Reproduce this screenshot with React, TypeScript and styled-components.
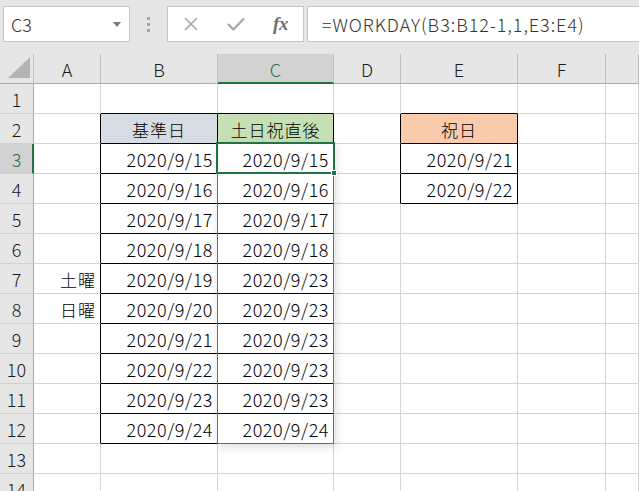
import React from "react";
import styled, { createGlobalStyle } from "styled-components";

const Global = createGlobalStyle`
  html, body { margin: 0; padding: 0; background: #ffffff; }
  body { width: 639px; height: 491px; overflow: hidden; font-family: "Noto Sans CJK JP", "Noto Sans", sans-serif; }
`;

const Page = styled.div`
  width: 639px;
  height: 491px;
  overflow: hidden;
  background: #ffffff;
  display: flex;
  flex-direction: column;
`;

const Toolbar = styled.div`
  display: flex;
  align-items: flex-start;
  height: 54px;
  box-sizing: border-box;
  padding: 6px 0 0 3px;
  background: #e6e6e6;
  flex-shrink: 0;
`;

const Box = styled.div<{ $w?: number }>`
  height: 36px;
  box-sizing: border-box;
  background: #ffffff;
  border: 1px solid #c6c6c6;
  display: flex;
  align-items: center;
  ${(p) => (p.$w ? `width: ${p.$w}px; flex-shrink: 0;` : `flex: 1; border-right: none;`)}
`;

const NameText = styled.span`
  flex: 1;
  padding-left: 7px;
  font-family: "Noto Sans CJK JP", "Noto Sans", sans-serif;
  font-size: 18px;
  font-weight: 300;
  color: #333333;
`;

const Caret = styled.svg`
  width: 8px;
  height: 5px;
  margin-right: 8px;
`;

const Grip = styled.div`
  width: 37px;
  height: 36px;
  flex-shrink: 0;
  display: flex;
  flex-direction: column;
  align-items: center;
  justify-content: center;
  gap: 3px;
  & > i {
    display: block;
    width: 3px;
    height: 3px;
    background: #a6a6a6;
  }
`;

const FxButton = styled.div`
  width: 45px;
  height: 34px;
  display: flex;
  align-items: center;
  justify-content: center;
  color: #a6a6a6;
`;

const FxText = styled.span`
  font-family: "Liberation Serif", "DejaVu Serif", serif;
  font-style: italic;
  font-weight: bold;
  font-size: 19px;
  color: #707070;
  letter-spacing: -0.5px;
`;

const Spacer = styled.div`
  width: 3px;
  flex-shrink: 0;
`;

const Formula = styled.span`
  padding-left: 14px;
  font-family: "Noto Sans CJK JP", "Noto Sans", sans-serif;
  font-size: 18px;
  font-weight: 300;
  letter-spacing: 0.95px;
  color: #333333;
  white-space: nowrap;
`;

const Sheet = styled.div`
  display: grid;
  grid-template-columns: 34px 67px 117px 116px 67px 117px 88px 1fr;
  grid-template-rows: repeat(15, 30px);
`;

const Corner = styled.div`
  grid-row: 1;
  grid-column: 1;
  background: #e6e6e6;
  border-right: 1px solid #c0c0c0;
  border-bottom: 1px solid #ababab;
  box-sizing: border-box;
  display: flex;
  align-items: flex-end;
  justify-content: flex-end;
  padding: 0 3px 5px 0;
`;

const ColHead = styled.div<{ $sel?: boolean; $gc: number }>`
  grid-row: 1;
  grid-column: ${(p) => p.$gc};
  box-sizing: border-box;
  background: ${(p) => (p.$sel ? "#d2d2d2" : "#e6e6e6")};
  border-right: 1px solid #c0c0c0;
  border-bottom: ${(p) => (p.$sel ? "2px solid #217346" : "1px solid #ababab")};
  display: flex;
  align-items: center;
  justify-content: center;
  font-family: "Noto Sans CJK JP", "Noto Sans", sans-serif;
  font-size: 18px;
  font-weight: 300;
  color: ${(p) => (p.$sel ? "#217346" : "#1a1a1a")};
  padding-top: ${(p) => (p.$sel ? "1px" : "0")};
`;

const RowHead = styled.div<{ $sel?: boolean; $gr: number }>`
  grid-row: ${(p) => p.$gr};
  grid-column: 1;
  box-sizing: border-box;
  background: ${(p) => (p.$sel ? "#d2d2d2" : "#e6e6e6")};
  border-right: ${(p) => (p.$sel ? "2px solid #217346" : "1px solid #ababab")};
  border-bottom: 1px solid #d0d0d0;
  display: flex;
  align-items: center;
  justify-content: center;
  font-family: "Noto Sans CJK JP", "Noto Sans", sans-serif;
  font-size: 18px;
  font-weight: 300;
  color: ${(p) => (p.$sel ? "#217346" : "#1a1a1a")};
  padding-left: ${(p) => (p.$sel ? "1px" : "0")};
`;

const Cell = styled.div<{
  $gr: number;
  $gc: number;
  $r: string;
  $b: string;
  $bg?: string;
  $align: string;
  $cjk?: boolean;
}>`
  grid-row: ${(p) => p.$gr};
  grid-column: ${(p) => p.$gc};
  box-sizing: border-box;
  border-right: 1px solid ${(p) => p.$r};
  border-bottom: 1px solid ${(p) => p.$b};
  background: ${(p) => p.$bg || "#ffffff"};
  display: flex;
  align-items: center;
  justify-content: ${(p) => p.$align};
  padding: 1px 4px 0 4px;
  font-family: "Noto Sans CJK JP", "Noto Sans", sans-serif;
  font-size: ${(p) => (p.$cjk ? "17px" : "18px")};
  font-weight: 300;
  letter-spacing: ${(p) => (p.$cjk ? "1px" : "0.55px")};
  color: #000000;
  white-space: nowrap;
  overflow: visible;
`;

const Spill = styled.div`
  grid-column: 4 / 5;
  grid-row: 4 / 14;
  margin: -1px 0 0 -1px;
  border: 1px solid #4472c4;
  box-shadow: 2px 3px 9px rgba(0, 0, 0, 0.14);
  position: relative;
  z-index: 1;
  pointer-events: none;
`;

const Selection = styled.div`
  grid-column: 4 / 5;
  grid-row: 4 / 5;
  margin: -2px -1px 0 -2px;
  border: 2px solid #217346;
  position: relative;
  z-index: 2;
  pointer-events: none;
`;

const Handle = styled.div`
  position: absolute;
  right: -4px;
  bottom: -4px;
  width: 6px;
  height: 6px;
  box-sizing: border-box;
  background: #217346;
  border: 1px solid #ffffff;
`;

const GRID = "#d4d4d4";
const BLACK = "#000000";

type CellDef = { text?: string; bg?: string; align?: string; cjk?: boolean };

const dates = (arr: number[]) => arr.map((d) => `2020/9/${d}`);
const bDates = dates([15, 16, 17, 18, 19, 20, 21, 22, 23, 24]);
const cDates = dates([15, 16, 17, 18, 23, 23, 23, 23, 23, 24]);

const cols = ["A", "B", "C", "D", "E", "F", ""];

function cellAt(row: number, col: number): CellDef {
  if (row === 2) {
    if (col === 1) return { text: "基準日", bg: "#d6dce4", align: "center", cjk: true };
    if (col === 2) return { text: "土日祝直後", bg: "#c6e0b4", align: "center", cjk: true };
    if (col === 4) return { text: "祝日", bg: "#f8cbad", align: "center", cjk: true };
  }
  if (row >= 3 && row <= 12) {
    if (col === 1) return { text: bDates[row - 3], align: "flex-end" };
    if (col === 2) return { text: cDates[row - 3], align: "flex-end" };
  }
  if (row === 7 && col === 0) return { text: "土曜", align: "flex-end", cjk: true };
  if (row === 8 && col === 0) return { text: "日曜", align: "flex-end", cjk: true };
  if (row === 3 && col === 4) return { text: "2020/9/21", align: "flex-end" };
  if (row === 4 && col === 4) return { text: "2020/9/22", align: "flex-end" };
  return {};
}

function rightColor(row: number, col: number) {
  if (row >= 2 && row <= 12 && col <= 2) return BLACK;
  if (row >= 2 && row <= 4 && (col === 3 || col === 4)) return BLACK;
  return GRID;
}

function bottomColor(row: number, col: number) {
  if ((col === 1 || col === 2) && row >= 1 && row <= 12) return BLACK;
  if (col === 4 && row >= 1 && row <= 4) return BLACK;
  return GRID;
}

export default function App() {
  const rows = Array.from({ length: 14 }, (_, i) => i + 1);
  return (
    <Page>
      <Global />
      <Toolbar>
        <Box $w={127}>
          <NameText>C3</NameText>
          <Caret viewBox="0 0 8 5">
            <path d="M0 0 L8 0 L4 5 Z" fill="#7a7a7a" />
          </Caret>
        </Box>
        <Grip>
          <i />
          <i />
          <i />
        </Grip>
        <Box $w={137}>
          <FxButton>
            <svg width="16" height="16" viewBox="0 0 16 16">
              <path d="M2 2 L14 14 M14 2 L2 14" stroke="#a6a6a6" strokeWidth="1.6" fill="none" />
            </svg>
          </FxButton>
          <FxButton>
            <svg width="18" height="14" viewBox="0 0 18 14">
              <path d="M1 7 L6.5 12.5 L17 1.5" stroke="#a6a6a6" strokeWidth="2.2" fill="none" />
            </svg>
          </FxButton>
          <FxButton>
            <FxText>fx</FxText>
          </FxButton>
        </Box>
        <Spacer />
        <Box>
          <Formula>=WORKDAY(B3:B12-1,1,E3:E4)</Formula>
        </Box>
      </Toolbar>
      <Sheet>
        <Corner>
          <svg width="22" height="21" viewBox="0 0 22 21">
            <path d="M22 0 L22 21 L0 21 Z" fill="#b4b4b4" />
          </svg>
        </Corner>
        {cols.map((c, i) => (
          <ColHead key={`h${i}`} $gc={i + 2} $sel={c === "C"}>
            {c}
          </ColHead>
        ))}
        {rows.map((r) => (
          <React.Fragment key={`r${r}`}>
            <RowHead $gr={r + 1} $sel={r === 3}>
              {r}
            </RowHead>
            {cols.map((_, ci) => {
              const d = cellAt(r, ci);
              return (
                <Cell
                  key={`c${r}-${ci}`}
                  $gr={r + 1}
                  $gc={ci + 2}
                  $r={rightColor(r, ci)}
                  $b={bottomColor(r, ci)}
                  $bg={d.bg}
                  $align={d.align || "flex-start"}
                  $cjk={d.cjk}
                >
                  {d.text}
                </Cell>
              );
            })}
          </React.Fragment>
        ))}
        <Spill />
        <Selection>
          <Handle />
        </Selection>
      </Sheet>
    </Page>
  );
}
